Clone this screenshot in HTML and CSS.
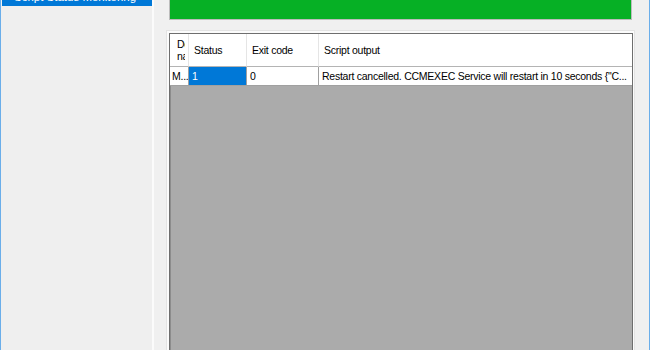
FILE: index.html
```html
<!DOCTYPE html>
<html lang="en">
<head>
  <meta charset="UTF-8">
  <title>Script Status Monitoring</title>
  <link rel="stylesheet" href="styles.css">
</head>
<body>
  <div class="window">

    <!-- Navegação lateral -->
    <aside class="nav">
      <div class="nav-item selected">Script Status Monitoring</div>
    </aside>

    <div class="splitter"></div>

    <!-- Área principal -->
    <main class="content">
      <div class="progress">
        <div class="progress-fill"></div>
      </div>

      <div class="grid-frame">
        <div class="grid">
          <div class="grid-head">
            <div class="hcell"><span class="clip">Device name</span></div>
            <div class="hcell">Status</div>
            <div class="hcell">Exit code</div>
            <div class="hcell">Script output</div>
          </div>
          <div class="grid-row">
            <div class="cell">M...</div>
            <div class="cell selected">1</div>
            <div class="cell">0</div>
            <div class="cell">Restart cancelled. CCMEXEC Service will restart in 10 seconds {"C...</div>
          </div>
        </div>
      </div>
    </main>

  </div>
</body>
</html>
```

FILE: styles.css
```css
* {
  box-sizing: border-box;
}

html, body {
  margin: 0;
  padding: 0;
  width: 650px;
  height: 350px;
  overflow: hidden;
  font-family: "Liberation Sans", Arial, sans-serif;
  font-size: 10.5px;
  letter-spacing: -0.25px;
  color: #000;
}

.window {
  display: flex;
  height: 350px;
  background: #f0f0f0;
  border-left: 1px solid #6aaeea;
  border-right: 1px solid #6aaeea;
}

.nav {
  width: 151px;
  padding-left: 1px;
  background: #efefef;
}

.nav-item {
  height: 18px;
  margin-top: -12px;
  padding-left: 12px;
  line-height: 18px;
  font-size: 11.5px;
  letter-spacing: 0;
  white-space: nowrap;
  overflow: hidden;
}

.nav-item.selected {
  background: #0078d7;
  color: #fff;
}

.splitter {
  width: 2px;
  background: #fbfbfb;
}

.content {
  flex: 1;
  display: flex;
  flex-direction: column;
  padding-left: 12px;
}

.progress {
  width: 463px;
  height: 32px;
  margin-top: -12px;
  margin-left: 3px;
  border: 1px solid #bcbcbc;
  background: #e6e6e6;
}

.progress-fill {
  height: 100%;
  background: #06b025;
}

.grid-frame {
  flex: 1;
  width: 469px;
  margin-top: 10px;
  border: 1px solid #e3e3e3;
  border-bottom: none;
  padding: 2px 1px 0 2px;
  background: #fbfbfb;
  display: flex;
}

.grid {
  flex: 1;
  background: #ababab;
  border: 1px solid #6e6e6e;
  border-bottom: none;
  box-shadow: inset 1px 1px 0 #8c8c8c;
}

.grid-head,
.grid-row {
  display: grid;
  grid-template-columns: 19px 58px 72px 1fr;
  background: #fff;
}

.hcell {
  height: 33px;
  padding: 0 5px;
  display: flex;
  align-items: center;
  border-right: 1px solid #e5e5e5;
  border-bottom: 1px solid #b4b4b4;
  white-space: nowrap;
  overflow: hidden;
}

.hcell:last-child {
  border-right: none;
}

.hcell:first-child {
  padding: 0 0 0 7px;
}

.clip {
  display: block;
  width: 8px;
  overflow: hidden;
  white-space: normal;
  line-height: 12px;
}

.cell {
  height: 19px;
  line-height: 18px;
  padding: 0 3px;
  border-right: 1px solid #a0a0a0;
  border-bottom: 1px solid #a0a0a0;
  white-space: nowrap;
  overflow: hidden;
}

.cell:first-child {
  padding: 0 2px;
}

.cell:last-child {
  border-right: none;
}

.cell.selected {
  background: #0078d7;
  color: #fff;
}
```
